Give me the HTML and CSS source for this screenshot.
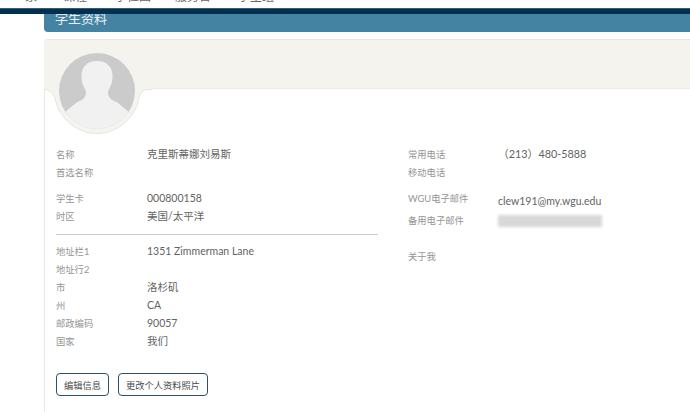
FILE: index.html
```html
<!DOCTYPE html>
<html lang="zh">
<head>
<meta charset="utf-8">
<title>学生资料</title>
<link rel="stylesheet" href="styles.css">
</head>
<body>
<header class="topbar">
  <nav class="nav">
    <span class="nav-item nav-a">家</span>
    <span class="nav-item nav-b">课程</span>
    <span class="nav-item nav-c">学位图</span>
    <span class="nav-item nav-d">服务台</span>
    <span class="nav-item nav-e">学生组</span>
  </nav>
  <div class="nav-rule"></div>
</header>
<main class="content">
  <h1 class="title">学生资料</h1>
  <section class="card">
    <div class="card-head"></div>
    <svg class="avatar" viewBox="0 0 108 96" width="108" height="96" aria-hidden="true">
      <defs><clipPath id="face"><circle cx="53" cy="51" r="38"/></clipPath></defs>
      <path fill="#f4f4f1" stroke="#e6e6e0" d="M0 49.500c5 0 9 3 11 9 4 20 22 35 42 35s38-15 42-35c1-5 4-9 9-9h4V0H0z"/>
      <path fill="#f4f3ee" d="M0 0h108v49H0z"/>
      <circle cx="53" cy="51" r="38" fill="#cbcbcb"/>
      <g clip-path="url(#face)">
        <path fill="#f1f1f1" transform="translate(0 8)" d="M53 13c-10 0-15.500 6-15.500 15 0 4 .5 7 1.500 9 1 3 3 5 3 7 0 3-1 5-2 6-1 2-5 3-8 5l-11 9-8 5v20h80V69l-8-5-11-9c-3-2-7-3-8-5-1-1-2-3-2-6 0-2 2-4 3-7 1-2 1.500-5 1.500-9 0-9-5.500-15-15.500-15z"/>
      </g>
    </svg>
    <div class="columns">
      <div class="col col-left">
        <dl class="group">
          <div class="row"><dt>名称</dt><dd>克里斯蒂娜刘易斯</dd></div>
          <div class="row"><dt>首选名称</dt><dd></dd></div>
        </dl>
        <dl class="group group-id">
          <div class="row"><dt>学生卡</dt><dd>000800158</dd></div>
          <div class="row"><dt>时区</dt><dd>美国/太平洋</dd></div>
        </dl>
        <hr class="divider">
        <dl class="group">
          <div class="row"><dt>地址栏1</dt><dd>1351 Zimmerman Lane</dd></div>
          <div class="row"><dt>地址行2</dt><dd></dd></div>
          <div class="row"><dt>市</dt><dd>洛杉矶</dd></div>
          <div class="row"><dt>州</dt><dd>CA</dd></div>
          <div class="row"><dt>邮政编码</dt><dd>90057</dd></div>
          <div class="row"><dt>国家</dt><dd>我们</dd></div>
        </dl>
        <div class="actions">
          <button class="btn" type="button">编辑信息</button>
          <button class="btn" type="button">更改个人资料照片</button>
        </div>
      </div>
      <div class="col col-right">
        <dl class="group">
          <div class="row"><dt>常用电话</dt><dd class="phone">（213）480-5888</dd></div>
          <div class="row"><dt>移动电话</dt><dd></dd></div>
        </dl>
        <dl class="group group-mail">
          <div class="row row-wgu"><dt>WGU电子邮件</dt><dd>clew191@my.wgu.edu</dd></div>
          <div class="row row-alt"><dt>备用电子邮件</dt><dd><span class="blur"></span></dd></div>
        </dl>
        <dl class="group group-about">
          <div class="row"><dt>关于我</dt><dd></dd></div>
        </dl>
      </div>
    </div>
  </section>
</main>
</body>
</html>
```
FILE: styles.css
```css
* { box-sizing: border-box; }
html, body { margin: 0; padding: 0; }
body {
  width: 690px;
  height: 412px;
  overflow: hidden;
  background: #fff;
  font-family: Lato, "Noto Sans CJK SC", sans-serif;
  color: #555;
}
.topbar { height: 14px; background: #fff; }
.nav { height: 8px; overflow: hidden; position: relative; }
.nav-item { position: absolute; top: -10px; font-size: 12px; line-height: 14px; color: #666; }
.nav-a { left: 25px; }
.nav-b { left: 63px; }
.nav-c { left: 115px; }
.nav-d { left: 175px; }
.nav-e { left: 238px; }
.nav-rule { height: 6px; background: #03304f; border-top: 1px solid #2c5f7d; }
.content { padding-left: 44px; }
.title {
  margin: 0;
  height: 18px;
  padding-left: 11px;
  background: #4583a3;
  border-radius: 0 0 0 4px;
  color: #e8f0f4;
  font-size: 13px;
  font-weight: 400;
  line-height: 9px;
  overflow: hidden;
}
.card {
  position: relative;
  margin-top: 7px;
  height: 381px;
  border-left: 1px solid #e8e8e2;
  border-top: 1px solid #e8e8e2;
  border-top-left-radius: 4px;
}
.card-head {
  height: 49px;
  background: #f4f3ee;
  border-bottom: 1px solid #ebebe6;
}
.avatar {
  position: absolute;
  left: -1px;
  top: 0;
  display: block;
}
.columns { display: flex; padding: 55px 0 0 11px; }
.col-left { width: 322px; }
.col-right { margin-left: 30px; width: 210px; }
.group { margin: 0; }
.row { display: flex; height: 18px; align-items: center; }
dt { width: 91px; flex: none; font-size: 9.3px; color: #959595; position: relative; top: 1px; }
dd { margin: 0; font-size: 10.5px; color: #636363; line-height: 14px; position: relative; top: 1px; }
.group-id { margin-top: 8px; }
.divider { margin: 10px 0 6px; border: 0; border-top: 1px solid #ccc; }
.actions { display: flex; gap: 9px; margin-top: 24px; }
.btn {
  height: 23px;
  padding: 0 7px;
  background: #fff;
  border: 1px solid #2e5068;
  border-radius: 4px;
  font: 9.25px Lato, "Noto Sans CJK SC", sans-serif;
  color: #4a4a4a;
}
.col-right dd { left: -3px; }
.col-right .phone { left: -1px; font-size: 10.8px; }
.group-mail { margin-top: 8px; }
.group-mail .row-wgu dd { top: 4px; left: -1px; }
.group-mail .row-alt dd { left: 0; }
.row-alt { margin-top: 4px; }
.blur {
  display: block;
  width: 104px;
  height: 12px;
  margin: 1px 0 0 -1px;
  background: #d8d8d8;
  filter: blur(1.5px);
}
.group-about { margin-top: 18px; }
```
